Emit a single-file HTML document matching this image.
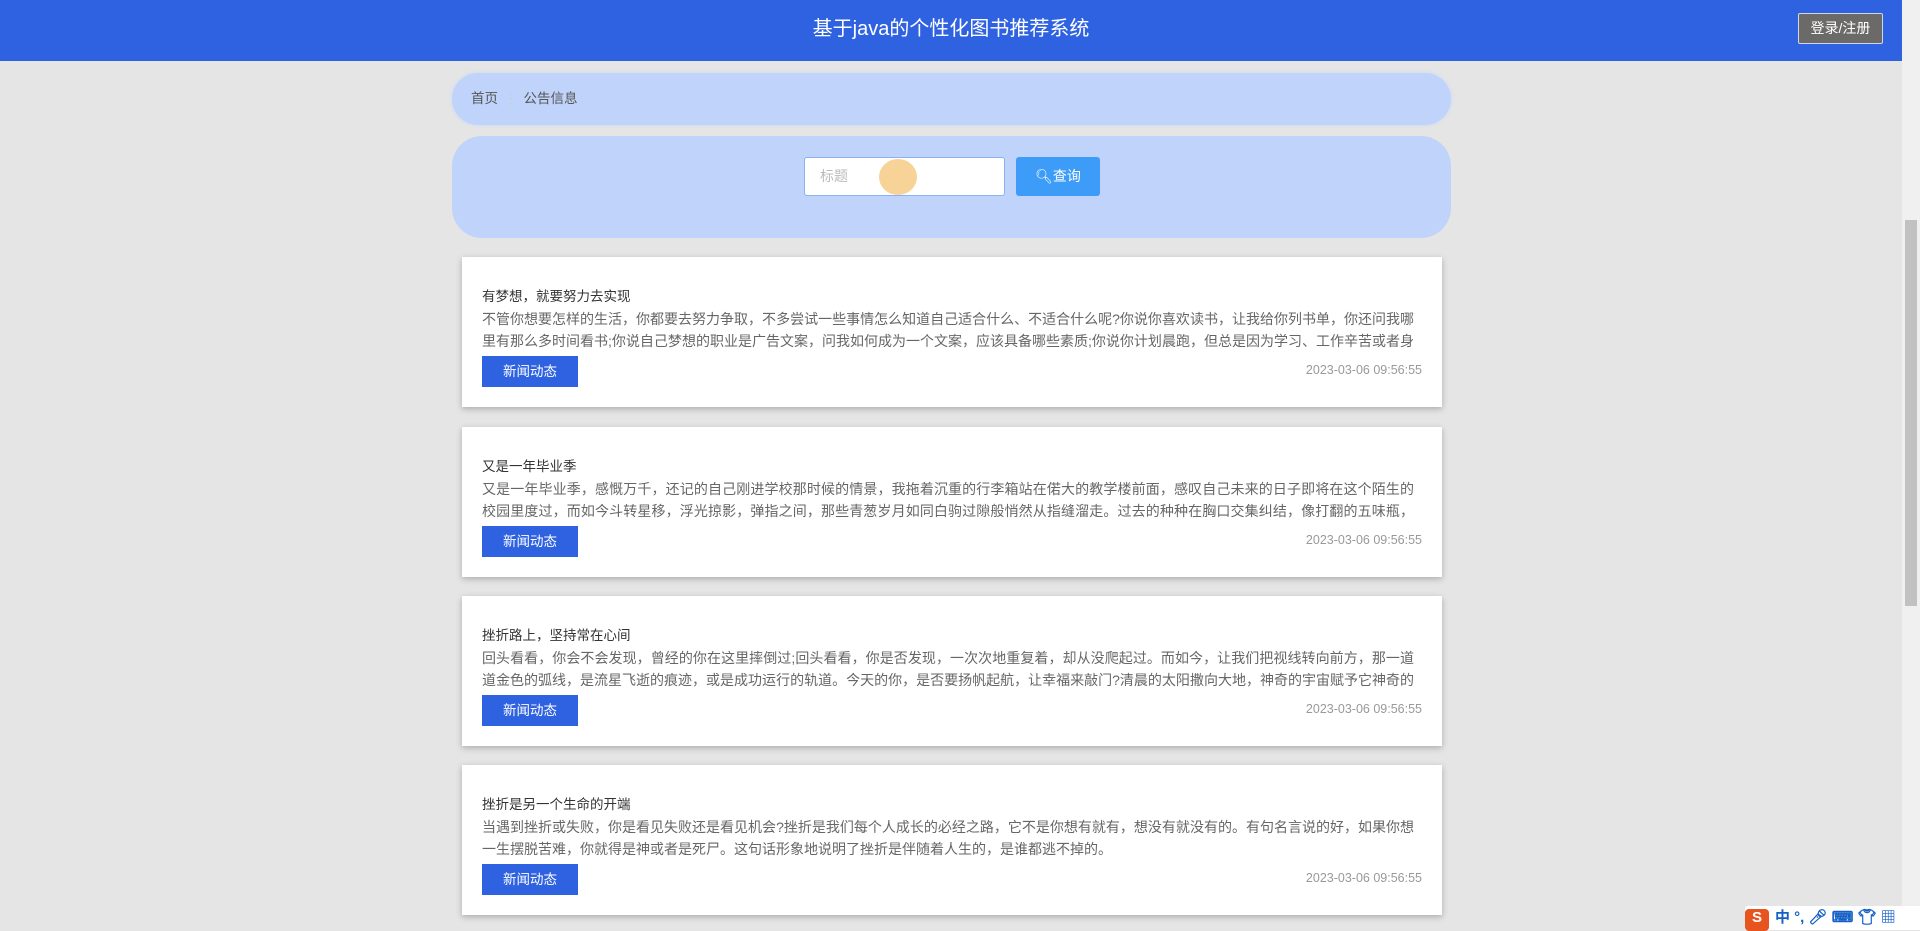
<!DOCTYPE html>
<html><head><meta charset="utf-8"><style>
*{margin:0;padding:0;box-sizing:border-box}
body{width:1920px;height:930px;overflow:hidden;background:#e5e5e5;font-family:"Liberation Sans","Noto Sans CJK SC",sans-serif;position:relative}
.hdr{position:absolute;left:0;top:0;width:1902px;height:61px;background:#2f62e0;color:#fff;font-size:20px;text-align:center;line-height:58px}
.login{position:absolute;left:1798px;top:13px;width:85px;height:31px;background:#6b6a69;border:1px solid #cfd6e4;border-radius:2px;color:#fff;font-size:14px;line-height:29px;text-align:center}
.sb{position:absolute;left:1902px;top:0;width:18px;height:930px;background:#f0f0f0}
.sb .th{position:absolute;left:3px;top:220px;width:12px;height:386px;background:#c1c1c1}
.bc{position:absolute;left:452px;top:73px;width:999px;height:52px;background:#c0d3fb;border-radius:26px;box-shadow:0 0 4px #c9d7f6;font-size:13.5px;color:#555;line-height:52px;padding-left:19px}
.bc span{color:#ccc;margin:0 6px}
.sr{position:absolute;left:452px;top:136px;width:999px;height:102px;background:#c0d3fb;border-radius:30px}
.inp{position:absolute;left:804px;top:157px;width:201px;height:39px;background:#fff;border:1px solid #8ab0f5;border-radius:3px;color:#bbb;font-size:14px;line-height:37px;padding-left:15px}
.cur{position:absolute;left:879px;top:159px;width:38px;height:36px;border-radius:50%;background:#f7d397}
.btn{position:absolute;left:1016px;top:157px;width:84px;height:39px;background:#3d9cf7;border-radius:3px;color:#fff;font-size:14px;line-height:39px;text-align:center}
.card{position:absolute;left:462px;width:980px;height:150px;background:#fff;box-shadow:0 2px 6px rgba(0,0,0,.25)}
.card h3{position:absolute;left:20px;top:28px;font-weight:normal;font-size:13.5px;color:#333}
.card p{position:absolute;left:20px;top:51px;width:932px;height:44px;overflow:hidden;font-size:14px;line-height:22px;color:#666;text-align:justify}
.card .tag{position:absolute;left:20px;top:99px;width:96px;height:31px;background:#2f62e0;color:#fff;font-size:13.5px;line-height:31px;text-align:center}
.card .dt{position:absolute;right:20px;top:106px;font-size:12.5px;color:#999}
.ime{position:absolute;left:1745px;top:906px;width:175px;height:24px;background:#fff;border-radius:3px 0 0 0;font-size:15px;color:#1560c8;font-weight:bold}
</style></head><body>
<div class="hdr">基于java的个性化图书推荐系统</div>
<div class="login">登录/注册</div>
<div class="sb"><div class="th"></div></div>
<div class="bc">首页<span>⋮</span>公告信息</div>
<div class="sr"></div>
<div class="inp">标题</div>
<div class="cur"></div>
<div class="btn">&#x1F50D;&#xFE0E;查询</div>

<div class="card" style="top:257px"><h3>有梦想，就要努力去实现</h3><p>不管你想要怎样的生活，你都要去努力争取，不多尝试一些事情怎么知道自己适合什么、不适合什么呢?你说你喜欢读书，让我给你列书单，你还问我哪里有那么多时间看书;你说自己梦想的职业是广告文案，问我如何成为一个文案，应该具备哪些素质;你说你计划晨跑，但总是因为学习、工作辛苦或者身体不适等原因</p><div class="tag">新闻动态</div><div class="dt">2023-03-06 09:56:55</div></div>
<div class="card" style="top:427px"><h3>又是一年毕业季</h3><p>又是一年毕业季，感慨万千，还记的自己刚进学校那时候的情景，我拖着沉重的行李箱站在偌大的教学楼前面，感叹自己未来的日子即将在这个陌生的校园里度过，而如今斗转星移，浮光掠影，弹指之间，那些青葱岁月如同白驹过隙般悄然从指缝溜走。过去的种种在胸口交集纠结，像打翻的五味瓶，甜酸苦辣</p><div class="tag">新闻动态</div><div class="dt">2023-03-06 09:56:55</div></div>
<div class="card" style="top:596px"><h3>挫折路上，坚持常在心间</h3><p>回头看看，你会不会发现，曾经的你在这里摔倒过;回头看看，你是否发现，一次次地重复着，却从没爬起过。而如今，让我们把视线转向前方，那一道道金色的弧线，是流星飞逝的痕迹，或是成功运行的轨道。今天的你，是否要扬帆起航，让幸福来敲门?清晨的太阳撒向大地，神奇的宇宙赋予它神奇的力量</p><div class="tag">新闻动态</div><div class="dt">2023-03-06 09:56:55</div></div>
<div class="card" style="top:765px"><h3>挫折是另一个生命的开端</h3><p>当遇到挫折或失败，你是看见失败还是看见机会?挫折是我们每个人成长的必经之路，它不是你想有就有，想没有就没有的。有句名言说的好，如果你想一生摆脱苦难，你就得是神或者是死尸。这句话形象地说明了挫折是伴随着人生的，是谁都逃不掉的。</p><div class="tag">新闻动态</div><div class="dt">2023-03-06 09:56:55</div></div>

<div class="ime"><span style="display:inline-block;width:24px;height:22px;background:#e8541e;color:#fff;border-radius:4px;text-align:center;margin:1px 6px 0 0">S</span>中 °, 🎤︎ ⌨︎ 👕︎ ▦</div>
</body></html>
